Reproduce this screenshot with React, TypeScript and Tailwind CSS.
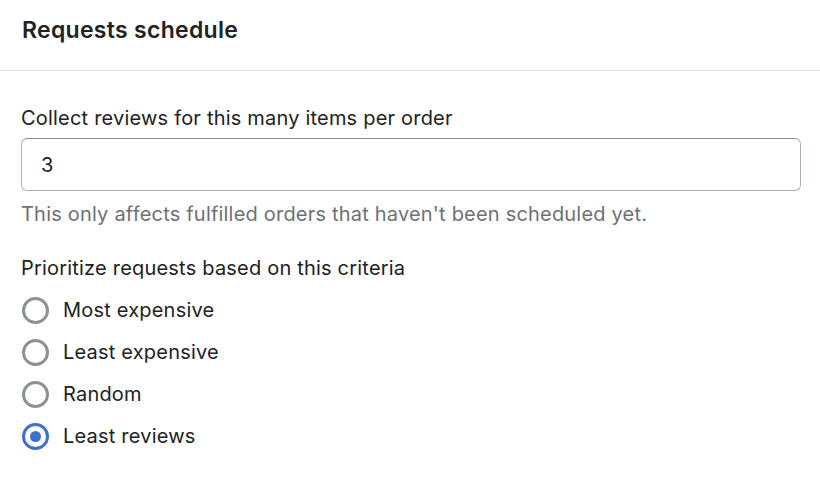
import React, { useState } from 'react';

const options = ['Most expensive', 'Least expensive', 'Random', 'Least reviews'];

export default function App(): JSX.Element {
  const [count, setCount] = useState<string>('3');
  const [criteria, setCriteria] = useState<string>('Least reviews');

  return (
    <div
      className="w-[820px] h-[478px] bg-white text-[#202223] overflow-hidden tracking-[0.2px]"
      style={{ fontFamily: 'Inter, "Noto Sans", sans-serif' }}
    >
      <div className="h-[71px] px-[22px] pt-[15px] border-b border-[#e1e3e5]">
        <h2 className="text-[23px] leading-[30px] font-semibold tracking-[0.3px]">Requests schedule</h2>
      </div>

      <div className="px-[21px] pt-[33px]">
        <label className="block text-[20px] leading-[28px] mb-[6px]">
          Collect reviews for this many items per order
        </label>
        <input
          value={count}
          onChange={(e) => setCount(e.target.value)}
          className="w-[780px] h-[53px] px-[19px] rounded-[6px] border border-[#aeb4b9] border-t-[#898f94] text-[20px] outline-none"
        />
        <div className="text-[20px] leading-[28px] text-[#6d7175] mt-[9px]">
          This only affects fulfilled orders that haven't been scheduled yet.
        </div>

        <div className="text-[20px] leading-[28px] mt-[26px]">
          Prioritize requests based on this criteria
        </div>
        <ul className="mt-[7px]">
          {options.map((o) => {
            const on = criteria === o;
            return (
              <li
                key={o}
                onClick={() => setCriteria(o)}
                className="h-[42px] flex items-center gap-[14px] cursor-pointer"
              >
                <span
                  className={`w-[27px] h-[27px] ml-[1px] rounded-full border-[3px] flex items-center justify-center ${
                    on ? 'border-[#3b6fd0]' : 'border-[#8c9196]'
                  }`}
                >
                  {on && <span className="w-[11px] h-[11px] rounded-full bg-[#3b6fd0]" />}
                </span>
                <span className="text-[20px] leading-[28px]">{o}</span>
              </li>
            );
          })}
        </ul>
      </div>
    </div>
  );
}
